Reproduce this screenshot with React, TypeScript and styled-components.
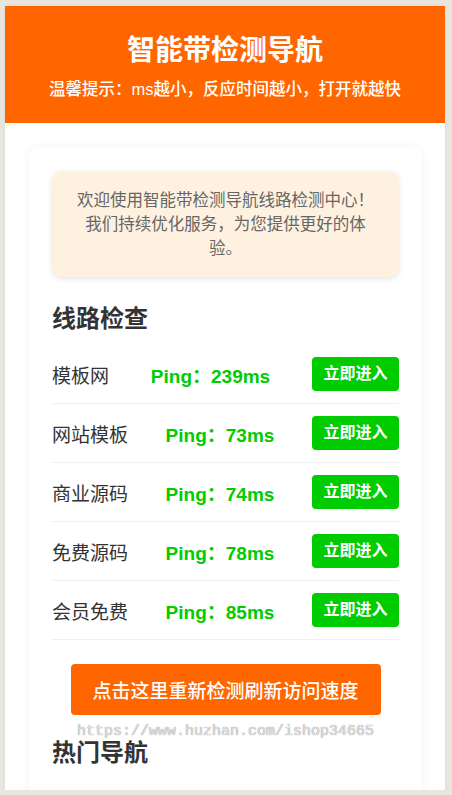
import React from "react";
import styled, { createGlobalStyle } from "styled-components";

interface Line {
  name: string;
  ping: number;
}

const LINES: Line[] = [
  { name: "模板网", ping: 239 },
  { name: "网站模板", ping: 73 },
  { name: "商业源码", ping: 74 },
  { name: "免费源码", ping: 78 },
  { name: "会员免费", ping: 85 },
];

const GlobalStyle = createGlobalStyle`
  html, body {
    margin: 0;
    padding: 0;
    background: #e9e5df;
    font-family: "Liberation Sans", "Noto Sans CJK SC", sans-serif;
  }
`;

const App = () => {
  return (
    <>
      <GlobalStyle />
      <Page>
        <Header>
          <Title>智能带检测导航</Title>
          <Subtitle>温馨提示：ms越小，反应时间越小，打开就越快</Subtitle>
        </Header>
        <Body>
          <Card>
            <Notice>
              欢迎使用智能带检测导航线路检测中心！
              <br />
              我们持续优化服务，为您提供更好的体验。
            </Notice>
            <SectionTitle>线路检查</SectionTitle>
            {LINES.map((line) => (
              <Row key={line.name}>
                <Name>{line.name}</Name>
                <Ping>Ping：{line.ping}ms</Ping>
                <EnterButton>立即进入</EnterButton>
              </Row>
            ))}
            <RetestButton>点击这里重新检测刷新访问速度</RetestButton>
            <SectionTitle $top={20}>热门导航</SectionTitle>
            <Watermark>https://www.huzhan.com/ishop34665</Watermark>
          </Card>
        </Body>
      </Page>
    </>
  );
};

export default App;

const Page = styled.div`
  margin: 6px 0 0 5px;
  width: 440px;
  height: 784px;
  overflow: hidden;
  background: #fff;
  box-shadow: 0 0 3px rgba(0, 0, 0, 0.08);
`;

const Header = styled.header`
  background: #ff6600;
  color: #fff;
  text-align: center;
  padding: 25px 10px 22px;
`;

const Title = styled.h1`
  margin: 0;
  font-size: 28px;
  line-height: 40px;
  font-weight: bold;
`;

const Subtitle = styled.p`
  margin: 6px 0 0;
  font-size: 16.5px;
  line-height: 24px;
  font-weight: 500;
`;

const Body = styled.div`
  padding: 24px 23px 0 24px;
`;

const Card = styled.div`
  position: relative;
  background: #fff;
  border-radius: 10px;
  box-shadow: 0 0 10px rgba(0, 0, 0, 0.06);
  padding: 24px 23px 60px;
`;

const Notice = styled.div`
  background: #fff1e0;
  border-radius: 10px;
  box-shadow: 0 2px 6px rgba(0, 0, 0, 0.1);
  color: #666;
  font-size: 16.5px;
  line-height: 24px;
  text-align: center;
  padding: 17px 20px;
`;

const SectionTitle = styled.h2<{ $top?: number }>`
  margin: ${(p) => p.$top ?? 24}px 0 9px;
  font-size: 24px;
  line-height: 35px;
  font-weight: bold;
  color: #333;
`;

const Row = styled.div`
  display: flex;
  align-items: center;
  justify-content: space-between;
  padding: 12px 0;
  border-bottom: 1px solid #f0f0f0;
`;

const Name = styled.span`
  font-size: 19px;
  color: #333;
`;

const Ping = styled.span`
  font-size: 19px;
  font-weight: bold;
  color: #00cc00;
`;

const EnterButton = styled.button`
  border: none;
  border-radius: 4px;
  background: #00cc00;
  color: #fff;
  font-family: inherit;
  font-size: 16px;
  font-weight: bold;
  line-height: 18px;
  height: 34px;
  padding: 0 11.5px;
  cursor: pointer;
`;

const RetestButton = styled.button`
  display: block;
  margin: 24px auto 0;
  width: 310px;
  height: 51px;
  border: none;
  border-radius: 4px;
  background: #ff6600;
  color: #fff;
  font-family: inherit;
  font-size: 19px;
  font-weight: 500;
  cursor: pointer;
`;

const Watermark = styled.div`
  position: absolute;
  left: 48px;
  top: 576px;
  font-family: "Liberation Mono", monospace;
  font-size: 15px;
  color: #e0e0e0;
  text-shadow: 0 0 1px #777;
  pointer-events: none;
`;
